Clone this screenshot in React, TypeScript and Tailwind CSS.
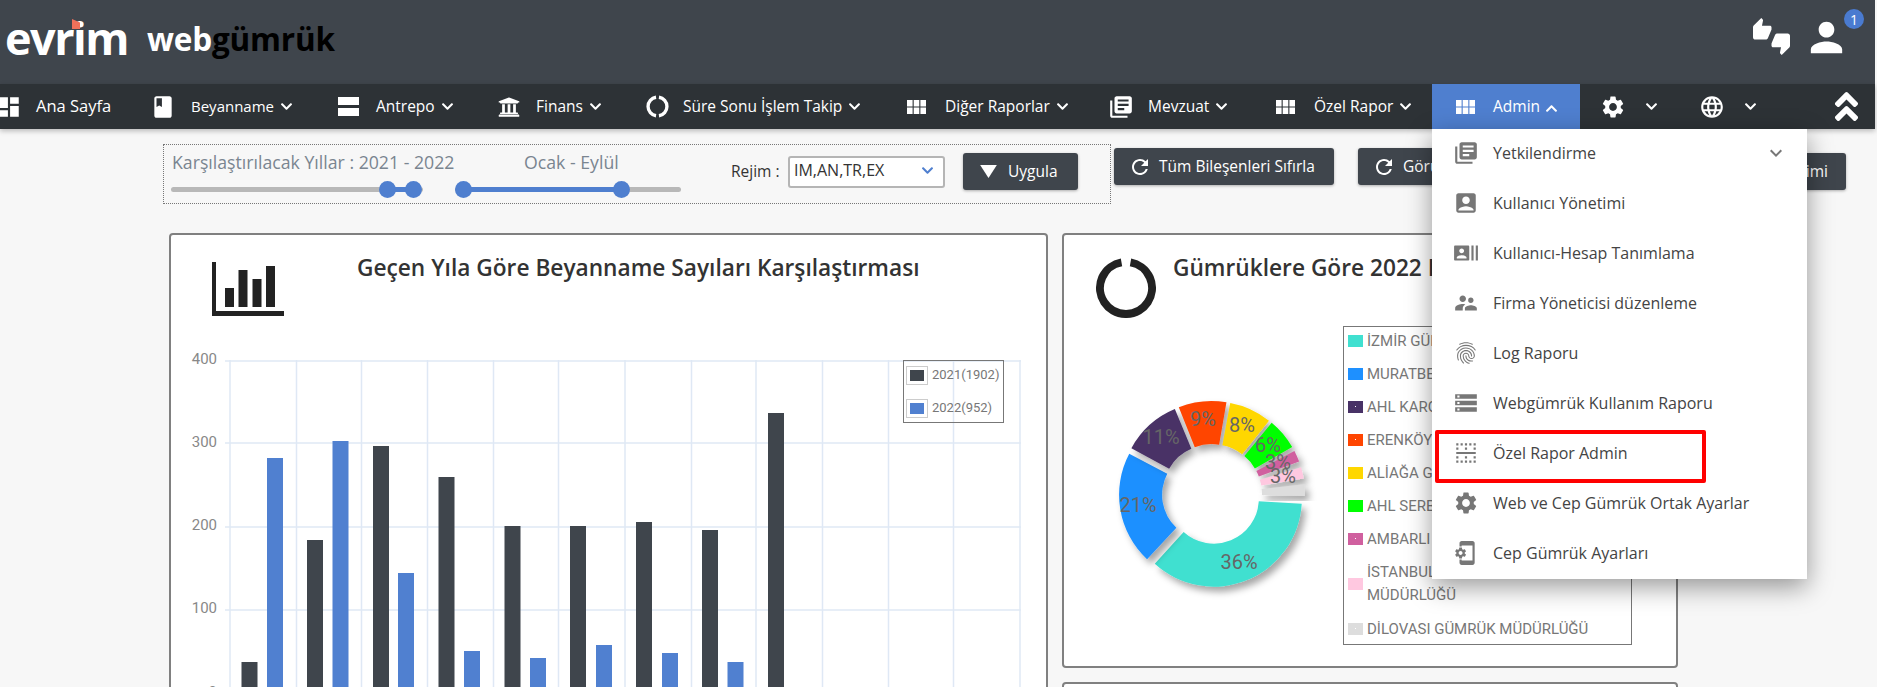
import type { ReactNode } from 'react'
import {
  MdAccountBox,
  MdBook,
  MdBorderHorizontal,
  MdDashboard,
  MdFingerprint,
  MdLanguage,
  MdLibraryBooks,
  MdKeyboardArrowDown,
  MdPerson,
  MdPhonelinkSetup,
  MdRecentActors,
  MdRefresh,
  MdSettings,
  MdStorage,
  MdSupervisorAccount,
  MdThumbsUpDown,
} from 'react-icons/md'
import { FaAngleDoubleUp, FaChevronDown, FaChevronUp, FaUniversity } from 'react-icons/fa'

function RingGaps() {
  return (
    <svg viewBox="0 0 24 24" className="h-[25px] w-[25px]" fill="none" stroke="currentColor" strokeWidth="3.2">
      <path d="M10.6 3.1A9 9 0 0 0 10.6 20.9" />
      <path d="M13.4 3.1A9 9 0 0 1 13.4 20.9" />
    </svg>
  )
}

function GridIcon() {
  return (
    <svg viewBox="0 0 19 14" className="h-[14px] w-[19px]" fill="currentColor">
      <rect x="0" y="0" width="5.6" height="6.5" />
      <rect x="6.7" y="0" width="5.6" height="6.5" />
      <rect x="13.4" y="0" width="5.6" height="6.5" />
      <rect x="0" y="7.5" width="5.6" height="6.5" />
      <rect x="6.7" y="7.5" width="5.6" height="6.5" />
      <rect x="13.4" y="7.5" width="5.6" height="6.5" />
    </svg>
  )
}

function AgendaIcon() {
  return (
    <svg viewBox="0 0 21 19" className="h-[19px] w-[21px]" fill="currentColor">
      <rect x="0" y="0" width="21" height="8" />
      <rect x="0" y="11" width="21" height="8" />
    </svg>
  )
}

const chevron = <FaChevronDown className="ml-[6px] h-[13px] w-[13px] shrink-0" />

const navItems: { label: string; width: string; icon: ReactNode; arrow: boolean; labelClass?: string }[] = [
  {
    label: 'Ana Sayfa',
    width: 'w-[158px] -ml-[4px]',
    icon: <MdDashboard size={26} />,
    arrow: false,
    labelClass: 'ml-[2px] text-[16.5px]',
  },
  { label: 'Beyanname', width: 'w-[184px]', icon: <MdBook size={26} className="-ml-[4px]" />, arrow: true, labelClass: '-ml-[1px] text-[15px]' },
  { label: 'Antrepo', width: 'w-[160px]', icon: <AgendaIcon />, arrow: true },
  { label: 'Finans', width: 'w-[147px]', icon: <FaUniversity size={22} />, arrow: true },
  { label: 'Süre Sonu İşlem Takip', width: 'w-[262px]', icon: <RingGaps />, arrow: true },
  { label: 'Diğer Raporlar', width: 'w-[203px]', icon: <GridIcon />, arrow: true },
  { label: 'Mevzuat', width: 'w-[166px]', icon: <MdLibraryBooks size={26} className="-ml-[2px]" />, arrow: true },
  { label: 'Özel Rapor', width: 'w-[156px]', icon: <GridIcon />, arrow: true },
]

const menuItems: { label: string; icon: ReactNode; arrow?: boolean }[] = [
  { label: 'Yetkilendirme', icon: <MdLibraryBooks size={26} />, arrow: true },
  { label: 'Kullanıcı Yönetimi', icon: <MdAccountBox size={26} /> },
  { label: 'Kullanıcı-Hesap Tanımlama', icon: <MdRecentActors size={26} /> },
  { label: 'Firma Yöneticisi düzenleme', icon: <MdSupervisorAccount size={26} /> },
  { label: 'Log Raporu', icon: <MdFingerprint size={26} /> },
  { label: 'Webgümrük Kullanım Raporu', icon: <MdStorage size={26} /> },
  { label: 'Özel Rapor Admin', icon: <MdBorderHorizontal size={26} /> },
  { label: 'Web ve Cep Gümrük Ortak Ayarlar', icon: <MdSettings size={26} /> },
  { label: 'Cep Gümrük Ayarları', icon: <MdPhonelinkSetup size={26} /> },
]

// x, top in page coordinates
const bars: { x: number; top: number; blue?: boolean }[] = [
  { x: 241.5, top: 662 },
  { x: 267, top: 458, blue: true },
  { x: 307, top: 540 },
  { x: 332.5, top: 441, blue: true },
  { x: 373, top: 446 },
  { x: 398, top: 573, blue: true },
  { x: 438.5, top: 477 },
  { x: 464, top: 651, blue: true },
  { x: 504.5, top: 526 },
  { x: 530, top: 658, blue: true },
  { x: 570, top: 526 },
  { x: 596, top: 645, blue: true },
  { x: 636, top: 522 },
  { x: 662, top: 653, blue: true },
  { x: 702, top: 530 },
  { x: 727.5, top: 662, blue: true },
  { x: 768, top: 413 },
]

const gridX = [230, 296.5, 361.5, 427.5, 493.5, 558.5, 625, 691.5, 756, 822.5, 888.5, 953.5, 1020]
const gridY = [361, 443, 527, 610]

const slices = [
  { pct: 36, color: '#40e0d0' },
  { pct: 21, color: '#1e90ff' },
  { pct: 11, color: '#483266' },
  { pct: 9, color: '#ff4500' },
  { pct: 8, color: '#ffd700' },
  { pct: 6, color: '#00ff00' },
  { pct: 3, color: '#d0609f' },
  { pct: 3, color: '#ffc8e0' },
  { pct: 3, color: '#dddddd' },
]

const donutLabels = [
  { t: '36%', x: 1239, y: 569 },
  { t: '21%', x: 1138, y: 512 },
  { t: '11%', x: 1161, y: 444 },
  { t: '9%', x: 1203, y: 426 },
  { t: '8%', x: 1242, y: 432 },
  { t: '6%', x: 1268, y: 452 },
  { t: '3%', x: 1278, y: 469 },
  { t: '3%', x: 1283, y: 483 },
]

const gumrukLegend = [
  { color: 'bg-[#40e0d0]', text: 'İZMİR GÜMRÜK MÜDÜRLÜĞÜ' },
  { color: 'bg-[#1e90ff]', text: 'MURATBEY GÜMRÜK MÜDÜRLÜĞÜ' },
  { color: 'bg-[#483266]', text: 'AHL KARGO GÜMRÜK MÜDÜRLÜĞÜ', dot: true },
  { color: 'bg-[#ff4500]', text: 'ERENKÖY GÜMRÜK MÜDÜRLÜĞÜ', dot: true },
  { color: 'bg-[#ffd700]', text: 'ALİAĞA GÜMRÜK MÜDÜRLÜĞÜ' },
  { color: 'bg-[#00ff00]', text: 'AHL SERBEST GÜMRÜK MÜDÜRLÜĞÜ' },
  { color: 'bg-[#d0609f]', text: 'AMBARLI GÜMRÜK MÜDÜRLÜĞÜ', dot: true },
]

function slicePath(startDeg: number, endDeg: number, r0: number, r1: number, cx: number, cy: number) {
  const rad = (d: number) => (d * Math.PI) / 180
  const p = (r: number, d: number) => `${cx + r * Math.cos(rad(d))} ${cy + r * Math.sin(rad(d))}`
  const large = endDeg - startDeg > 180 ? 1 : 0
  return `M${p(r1, startDeg)} A${r1} ${r1} 0 ${large} 1 ${p(r1, endDeg)} L${p(r0, endDeg)} A${r0} ${r0} 0 ${large} 0 ${p(r0, startDeg)} Z`
}

function Donut() {
  let angle = 3
  const cx = 1212
  const cy = 494
  return (
    <svg viewBox="1100 326 240 320" className="block h-[320px] w-[240px] shrink-0">
      <defs>
        <filter id="sliceShadow" x="-30%" y="-30%" width="170%" height="170%">
          <feDropShadow dx="4" dy="5" stdDeviation="3.5" floodColor="#000" floodOpacity="0.35" />
        </filter>
      </defs>
      {slices.map((s) => {
        const sweep = s.pct * 3.6
        const start = angle
        angle += sweep
        const mid = ((start + sweep / 2) * Math.PI) / 180
        const ox = 5 * Math.cos(mid)
        const oy = 5 * Math.sin(mid)
        const inset = s.pct === 3 ? 1.6 : 0.4
        return (
          <path
            key={s.color}
            d={slicePath(start + inset, start + sweep - inset, 45, 88, cx + ox, cy + oy)}
            fill={s.color}
            filter="url(#sliceShadow)"
          />
        )
      })}
      {donutLabels.map((l, i) => (
        <text key={i} x={l.x} y={l.y} textAnchor="middle" fontSize="20" fontFamily="Roboto, sans-serif" fill="#666">
          {l.t}
        </text>
      ))}
    </svg>
  )
}

function BarChart() {
  return (
    <svg viewBox="180 345 860 345" className="block h-[345px] w-[860px]">
      {gridX.map((x) => (
        <line key={x} x1={x} x2={x} y1={360} y2={690} stroke="#dfe8f5" strokeWidth="1.5" />
      ))}
      {gridY.map((y) => (
        <line key={y} x1={225} x2={1021} y1={y} y2={y} stroke="#dfe8f5" strokeWidth="1.5" />
      ))}
      {bars.map((b) => (
        <rect key={b.x} x={b.x} y={b.top} width="16" height={690 - b.top} fill={b.blue ? '#5080d0' : '#3f454c'} />
      ))}
      {[
        ['400', 364],
        ['300', 447],
        ['200', 530],
        ['100', 613],
        ['0', 697],
      ].map(([t, y]) => (
        <text key={t} x={217} y={y} textAnchor="end" fontSize="15" fontFamily="Roboto, sans-serif" fill="#888">
          {t}
        </text>
      ))}
    </svg>
  )
}

function Slider({ track, fill, thumbs }: { track: string; fill: string; thumbs: string[] }) {
  return (
    <div className={`relative h-[17px] ${track}`}>
      <div className="absolute left-0 top-[6px] h-[5px] w-full rounded bg-[#b8b8b8]" />
      <div className={`absolute top-[6px] h-[5px] bg-[#4f7fcf] ${fill}`} />
      {thumbs.map((t) => (
        <div key={t} className={`absolute top-0 h-[17px] w-[17px] rounded-full bg-[#4f7fcf] ${t}`} />
      ))}
    </div>
  )
}

function ToolButton({ className, children }: { className: string; children: ReactNode }) {
  return (
    <button
      className={`flex h-[37px] shrink-0 items-center rounded-[3px] bg-[#3f454c] text-[15.5px] whitespace-nowrap text-white shadow-[0_1px_3px_rgba(0,0,0,0.3)] ${className}`}
    >
      {children}
    </button>
  )
}

export default function App() {
  return (
    <div className="relative h-[687px] w-[1877px] overflow-hidden bg-[#f7f7f7] font-['Open_Sans',sans-serif]">
      {/* top bar */}
      <header className="flex h-[84px] w-[1875px] items-start justify-between bg-[#3f454c]">
        <div className="flex items-start">
          <div className="relative ml-[5px] mt-[12px] text-[45px] leading-[52px] font-bold tracking-[-1.5px] text-white">
            evrim
            <div className="absolute left-[67px] top-[7px] h-[10px] w-[8px] bg-[#f0705a] [clip-path:polygon(0_0,100%_35%,100%_100%,0_100%)]" />
          </div>
          <div className="ml-[19px] mt-[19px] text-[31.5px] leading-[40px] font-bold tracking-[-0.2px] text-black">
            <span className="text-white">web</span>gümrük
          </div>
        </div>
        <div className="flex items-start">
          <MdThumbsUpDown className="mt-[18px] text-white" size={37} />
          <div className="relative ml-[13px] mr-[25px] mt-[14px]">
            <MdPerson className="text-white" size={47} />
            <span className="absolute -right-[14px] -top-[5px] flex h-[20px] w-[20px] items-center justify-center rounded-full bg-[#4a7bd0] text-[14px] text-white">
              1
            </span>
          </div>
        </div>
      </header>

      {/* main nav */}
      <nav className="relative z-20 flex h-[45px] w-[1875px] items-center bg-[#2d3236] text-[15.5px] font-medium whitespace-nowrap text-white shadow-[0_2px_5px_rgba(0,0,0,0.25)]">
        {navItems.map((item) => (
          <div key={item.label} className={`flex shrink-0 items-center ${item.width}`}>
            <div className="flex w-[38px] shrink-0 items-center justify-start">{item.icon}</div>
            <span className={item.labelClass}>{item.label}</span>
            {item.arrow && chevron}
          </div>
        ))}
        <div className="relative flex h-full w-[148px] shrink-0 items-center bg-[#4f7fcf] pl-[24px]">
          <div className="flex w-[37px] shrink-0 items-center">
            <GridIcon />
          </div>
          <span>Admin</span>
          <FaChevronUp className="ml-[5px] mt-[3px] h-[13px] w-[13px]" />

          {/* admin dropdown */}
          <div className="absolute left-0 top-[45px] w-[375px] bg-white text-[16px] font-normal text-[#444] shadow-[0_8px_24px_rgba(0,0,0,0.4)]">
            {menuItems.map((m) => (
              <div key={m.label} className="flex h-[50px] items-center pb-[2px] pl-[21px] pr-[19px]">
                <div className="flex w-[40px] shrink-0 text-[#777]">{m.icon}</div>
                <span className="grow">{m.label}</span>
                {m.arrow && <MdKeyboardArrowDown size={24} className="text-[#777]" />}
              </div>
            ))}
            <div className="absolute left-[3px] top-[301px] h-[53px] w-[271px] rounded-[2px] border-[4px] border-[#ff0000]" />
          </div>
        </div>
        <div className="flex w-[121px] shrink-0 items-center pl-[22px]">
          <MdSettings size={26} className="-ml-[2px]" />
          <FaChevronDown className="ml-[19px] h-[13px] w-[13px]" />
        </div>
        <div className="flex w-[134px] shrink-0 items-center">
          <MdLanguage size={26} className="-ml-[2px]" />
          <FaChevronDown className="ml-[19px] h-[13px] w-[13px]" />
        </div>
        <FaAngleDoubleUp size={37} className="-ml-[7px]" />
      </nav>

      {/* filter toolbar */}
      <div className="flex items-start pl-[163px] pt-[15px]">
        <div className="flex h-[60px] w-[948px] shrink-0 items-start border border-dotted border-[#777]">
          <div className="w-[520px] shrink-0 pl-[7px] pt-[5px]">
            <div className="flex h-[24px] pl-[1px] text-[17.7px] leading-[24px] text-[#7a8590]">
              <span className="w-[352px] shrink-0">Karşılaştırılacak Yıllar : 2021 - 2022</span>
              <span>Ocak - Eylül</span>
            </div>
            <div className="mt-[7px] flex">
              <Slider
                track="w-[252px]"
                fill="left-[216px] w-[27px]"
                thumbs={['left-[208px]', 'left-[234px]']}
              />
              <Slider
                track="ml-[32px] w-[226px]"
                fill="left-[8px] w-[159px]"
                thumbs={['left-0', 'left-[158px]']}
              />
            </div>
          </div>
          <div className="ml-[47px] mt-[8px] flex h-[37px] items-center">
            <span className="w-[57px] text-[15.5px] text-[#333]">Rejim :</span>
            <div className="flex h-[32px] w-[157px] items-start justify-between rounded-[3px] border-2 border-[#b5b5b5] bg-white pl-[4px] pr-[9px] pt-[1px] text-[16px] leading-[22px] text-[#333]">
              IM,AN,TR,EX
              <FaChevronDown className="mt-[5px] h-[13px] w-[13px] text-[#4f7fcf]" />
            </div>
            <ToolButton className="ml-[18px] w-[115px] pl-[17px]">
              <svg viewBox="0 0 18 14" className="h-[13px] w-[17px]" fill="white">
                <polygon points="0,0 18,0 9,14" />
              </svg>
              <span className="ml-[11px]">Uygula</span>
            </ToolButton>
          </div>
        </div>
        <ToolButton className="ml-[3px] mt-[4px] w-[220px] pl-[14px]">
          <MdRefresh size={24} />
          <span className="ml-[7px]">Tüm Bileşenleri Sıfırla</span>
        </ToolButton>
        <ToolButton className="ml-[24px] mt-[4px] w-[240px] pl-[14px]">
          <MdRefresh size={24} />
          <span className="ml-[7px]">Görünümü Sıfırla</span>
        </ToolButton>
        <ToolButton className="ml-[24px] mt-[9px] w-[224px] justify-end pr-[18px]">
          <span>Grafik Yönetimi</span>
        </ToolButton>
      </div>

      {/* cards */}
      <div className="ml-[169px] mt-[29px] flex items-start gap-[14px]">
        <section className="h-[520px] w-[879px] shrink-0 rounded-[4px] border-2 border-[#808080] bg-white">
          <div className="flex pl-[41px] pt-[19px]">
            <svg viewBox="0 0 72 54" className="mt-[8px] h-[54px] w-[72px] shrink-0" fill="#222">
              <rect x="0" y="0" width="4" height="54" />
              <rect x="0" y="49" width="72" height="5" />
              <rect x="13" y="26" width="9" height="19" />
              <rect x="26.5" y="8" width="9" height="37" />
              <rect x="40.5" y="17" width="9" height="28" />
              <rect x="54" y="4" width="9" height="41" />
            </svg>
            <h2 className="ml-[73px] text-[22.7px] leading-[28px] font-semibold whitespace-nowrap text-[#333]">
              Geçen Yıla Göre Beyanname Sayıları Karşılaştırması
            </h2>
          </div>
          <div className="relative ml-[9px] mt-[29px] w-[860px]">
            <BarChart />
            <div className="absolute left-[723px] top-[15px] h-[63px] w-[101px] border border-[#777] font-['Roboto',sans-serif] text-[13px] leading-[18px] text-[#777]">
              <div className="ml-[3px] mt-[5px] flex items-center">
                <div className="h-[17px] w-[20px] border-[3px] border-white bg-[#3f454c] outline outline-[#ccc]" />
                <span className="ml-[5px]">2021(1902)</span>
              </div>
              <div className="ml-[3px] mt-[15px] flex items-center">
                <div className="h-[17px] w-[20px] border-[3px] border-white bg-[#5080d0] outline outline-[#ccc]" />
                <span className="ml-[5px]">2022(952)</span>
              </div>
            </div>
          </div>
        </section>

        <div className="flex w-[616px] shrink-0 flex-col gap-[14px]">
          <section className="h-[435px] rounded-[4px] border-2 border-[#808080] bg-white">
            <div className="flex h-[72px] pl-[32px] pt-[19px]">
              <svg viewBox="0 0 60 60" className="mt-[4px] h-[60px] w-[60px] shrink-0" fill="none" stroke="#222" strokeWidth="8">
                <path d="M25.5 4.4A26 26 0 1 0 34.5 4.4" />
              </svg>
              <h2 className="ml-[17px] text-[22.7px] leading-[28px] font-semibold whitespace-nowrap text-[#333]">
                Gümrüklere Göre 2022 Beyanname Dağılımı
              </h2>
            </div>
            <div className="ml-[36px] mt-[19px] flex items-start">
              <Donut />
              <div className="ml-[3px] h-[319px] w-[289px] shrink-0 border border-[#777] pl-[4px] pt-[4px] font-['Roboto',sans-serif] text-[15px] leading-[20px] text-[#777]">
                {gumrukLegend.map((l) => (
                  <div key={l.text} className="mb-[13px] flex h-[20px] items-center whitespace-nowrap">
                    <div className={`relative h-[12px] w-[15px] shrink-0 ${l.color}`}>
                      {l.dot && <div className="absolute left-[7px] top-[5px] h-[1px] w-[1px] bg-white" />}
                    </div>
                    <span className="ml-[4px]">{l.text}</span>
                  </div>
                ))}
                <div className="mb-[13px] flex h-[44px] items-center leading-[23px]">
                  <div className="h-[12px] w-[15px] shrink-0 bg-[#ffc8e0]" />
                  <span className="ml-[4px]">
                    İSTANBUL HAVALİMANI GÜMRÜK
                    <br />
                    MÜDÜRLÜĞÜ
                  </span>
                </div>
                <div className="flex h-[20px] items-center whitespace-nowrap">
                  <div className="relative h-[12px] w-[15px] shrink-0 bg-[#dddddd]">
                    <div className="absolute left-[7px] top-[5px] h-[1px] w-[1px] bg-white" />
                  </div>
                  <span className="ml-[4px]">DİLOVASI GÜMRÜK MÜDÜRLÜĞÜ</span>
                </div>
              </div>
            </div>
          </section>
          <section className="h-[200px] rounded-[4px] border-2 border-[#808080] bg-white" />
        </div>
      </div>
    </div>
  )
}
